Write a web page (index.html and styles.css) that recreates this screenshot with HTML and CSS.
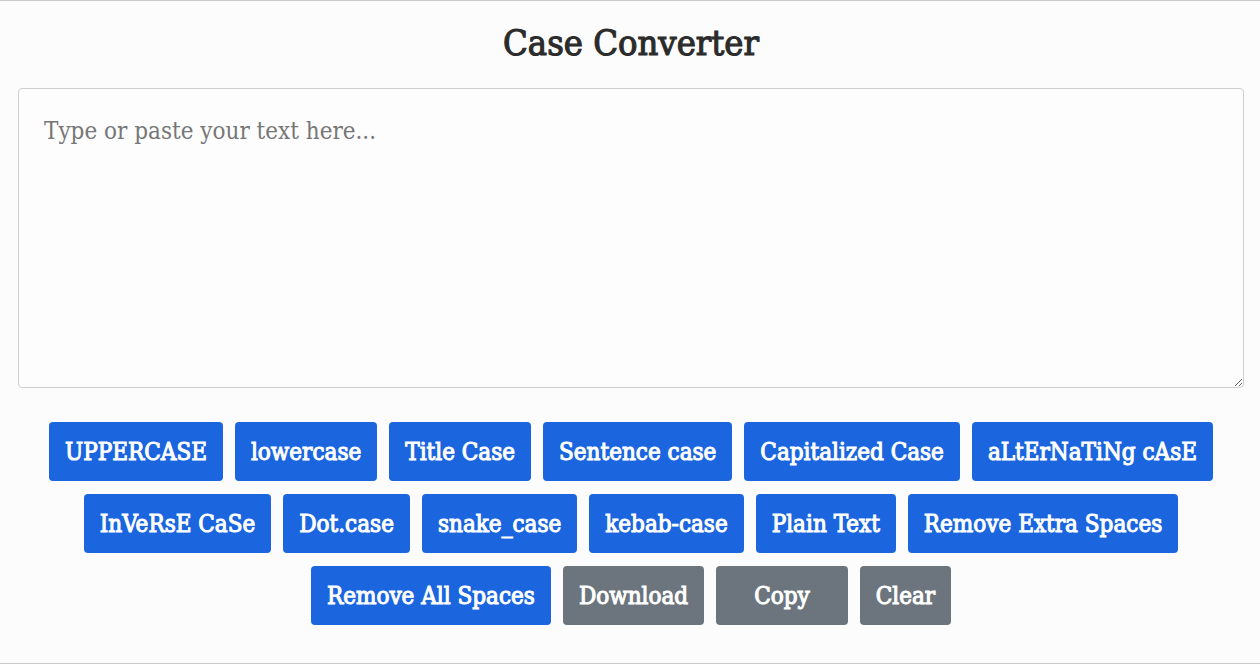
FILE: index.html
```html
<!DOCTYPE html>
<html lang="en">
<head>
    <meta charset="UTF-8">
    <meta name="viewport" content="width=device-width, initial-scale=1.0">
    <title>Case Converter</title>
    <link rel="stylesheet" href="styles.css">
</head>
<body>
    <main class="converter">
        <h1 class="title">Case Converter</h1>

        <textarea class="text-input" placeholder="Type or paste your text here..."></textarea>

        <section class="actions">
            <button class="btn">UPPERCASE</button>
            <button class="btn">lowercase</button>
            <button class="btn">Title Case</button>
            <button class="btn">Sentence case</button>
            <button class="btn">Capitalized Case</button>
            <button class="btn">aLtErNaTiNg cAsE</button>
            <button class="btn">InVeRsE CaSe</button>
            <button class="btn">Dot.case</button>
            <button class="btn">snake_case</button>
            <button class="btn">kebab-case</button>
            <button class="btn">Plain Text</button>
            <button class="btn">Remove Extra Spaces</button>
            <button class="btn">Remove All Spaces</button>
            <button class="btn btn-gray">Download</button>
            <button class="btn btn-gray btn-wide">Copy</button>
            <button class="btn btn-gray">Clear</button>
        </section>
    </main>
</body>
</html>
```

FILE: styles.css
```css
html{
    box-sizing: border-box;
    font-family: "DejaVu Serif Condensed", "DejaVu Serif", serif;
    font-size: 16px;
}

*, *::after, *::before{
    box-sizing: inherit;
}

body{
    margin: 0;
    background-color: #fcfcfc;
}

.converter{
    height: 664px;
    padding: 0 16px 0 18px;
    border-top: 1px solid #c9c9c9;
    border-bottom: 1px solid #c9c9c9;
}

.title{
    margin: 0;
    padding: 21px 0 24px;
    text-align: center;
    font-size: 36px;
    font-weight: normal;
    line-height: 42px;
    color: #2b2b2b;
    -webkit-text-stroke: 1.1px #2b2b2b;
}

.text-input{
    display: block;
    width: 100%;
    height: 300px;
    padding: 28px 25px;
    border: 1px solid #cfcfcf;
    border-radius: 4px;
    background-color: #fdfdfd;
    font-family: inherit;
    font-size: 24px;
    color: #333;
    resize: vertical;
}

.text-input::placeholder{
    color: #777;
}

.actions{
    display: flex;
    flex-wrap: wrap;
    justify-content: center;
    gap: 13px 12px;
    padding: 34px 28px 0;
}

.btn{
    padding: 0 16px 0 16px;
    height: 59px;
    border: none;
    border-radius: 4px;
    background-color: #1b66df;
    font-family: inherit;
    font-size: 24px;
    color: #fff;
    -webkit-text-stroke: 1px #fff;
}

.btn-gray{
    background-color: #6c757d;
}

.btn-wide{
    padding: 0 38px;
}
```
